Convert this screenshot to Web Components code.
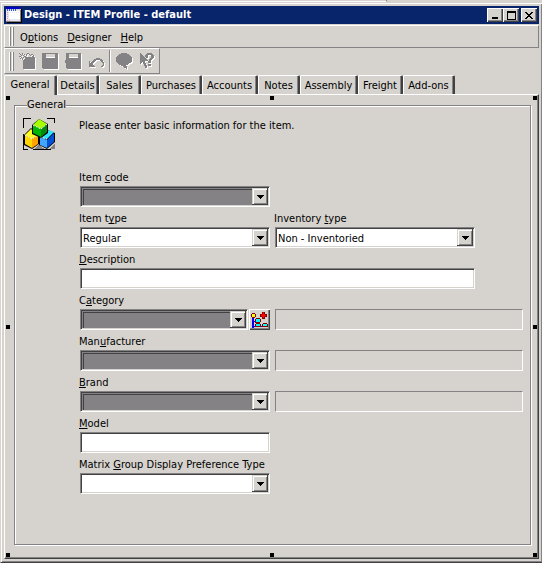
<!DOCTYPE html>
<html lang="en">
<head>
<meta charset="utf-8">
<title>Design - ITEM Profile - default</title>
<style>
:root{--face:#d6d3ce;--light:#fff;--shade:#848284;--dark:#424142;--navy:#08246b}
html,body{margin:0;height:100%}
body{display:flex;flex-direction:column;background:var(--face);color:#000;font:11px/14px "DejaVu Sans Condensed","DejaVu Sans",sans-serif}
</style>
</head>
<body>
<back-window></back-window>
<app-window>
  <title-bar>Design - ITEM Profile - default</title-bar>
  <menu-bar></menu-bar>
  <tool-bar></tool-bar>
  <tab-strip></tab-strip>
  <design-surface><item-form></item-form></design-surface>
</app-window>
<script>
const define = (name, html, init) => {
  const t = document.createElement('template');
  t.innerHTML = html;
  customElements.define(name, class extends HTMLElement {
    constructor() { super(); this.attachShadow({mode:'open'}); }
    connectedCallback() {
      if (this.shadowRoot.firstChild) return;
      this.shadowRoot.append(t.content.cloneNode(true));
      if (init) init.call(this, this.shadowRoot);
    }
  });
};
const reset = '*{box-sizing:border-box}button,input,select{font:inherit;color:inherit;margin:0;border:0;border-radius:0;padding:0;outline:0}u{text-underline-offset:1px;text-decoration-thickness:1px;text-decoration-skip-ink:none}svg{display:block;shape-rendering:crispEdges}';
// "&x" marks the access key of a caption
const caption = s => s.replace(/&(.)/, '<u>$1</u>');

define('back-window', `<style>:host{display:block;height:3px;flex:none}
div{width:71.4%;height:2px;box-sizing:border-box;border-bottom:1px solid #fff;border-right:1px solid var(--shade)}</style><div></div>`);

define('app-window', `<style>
:host{flex:1;display:flex;flex-direction:column;padding:3px;border-left:1px solid var(--face);border-bottom:1px solid var(--dark);box-shadow:inset 1px 1px var(--light),inset -1px -1px var(--shade)}
::slotted(*){flex:none}::slotted(design-surface){flex:1}
</style><slot></slot>`);

// Icons drawn from rows of characters, one character for a pixel
define('pixel-icon', `<style>${reset}:host{display:block}:host([etched]) svg{filter:drop-shadow(1px 1px 0 #fff)}</style>`, function(root){
  const rows = glyphs[this.getAttribute('name')];
  const w = Math.max(...rows.map(r => r.length));
  const colors = {'#':this.hasAttribute('etched') ? '#848284' : '#000', 'w':'#fff', 'f':'#d6d3ce', 'g':'#848284', 'n':'#0800c6', 'l':'#e7e7ef', 'r':'#e79cad', 'b':'#3165ce'};
  let s = '';
  rows.forEach((r, y) => { for (const m of r.matchAll(/([^.])\1*/g)) s += `<rect x="${m.index}" y="${y}" width="${m[0].length}" height="1" fill="${colors[m[1]]}"/>`; });
  root.innerHTML += `<svg width="${w}" height="${rows.length}" viewBox="0 0 ${w} ${rows.length}" aria-hidden="true">${s}</svg>`;
});
const glyphs = {
  app:['nnnnnnnnnnnnnn..','nnnnnnnnnnnnnn..','fbfbfbfbfbfffff#','lblblblblbllllg#','lllwwwwwwwwwwwg#','lrlwlwlwlwlwlwg#','lllwwwwwwwwwwwg#','lrlwwwwwwwwwwwg#','lllwwwwwwwwwwwg#','lrlwwwwwwwwwwwg#','lllwwwwwwwwwwwg#','lrlwwwwwwwwwwwg#','llllllllllllllg#','lrlrllllllllllg#','ggggggggggggggg#','.###############'],
  min:['........','........','........','........','........','........','.######.','.######.'],
  max:['#########','#########','#.......#','#.......#','#.......#','#.......#','#.......#','#.......#','#########'],
  close:['##....##','.##..##.','..####..','...##...','..####..','.##..##.','##....##'],
  arrow:['#######','.#####.','..###..','...#...'],
  add:['#..#....##......','.#.#.#.#..#.##..','..#.#..#...#..#.','##...##......##.','..#.#.##########','.#.#..##########','...#.###########','....############','....############','....############','....############','....############','....############','....############','....############','....############'],
  save:['################','####fffffffff###','####fffffffff###','####fffffffff###','####wwwwwwwww###','################','################','################','################','################','################','################','################','################','################','.###############'],
  saveas:['.###############','.###fffffffff###','.###fffffffff###','.###fffffffff###','.###wwwwwwwww###','.###############','.###############','################','################','################','.###############','.###############','.###############','.###############','.###############','..##############'],
  undo:['................','................','................','........####....','......########..','.....###....###.','.#..###......##.','.#.###........##','.####..........#','.####..........#','.#####........##','.######......##.','................'],
  balloon:['.....######.....','...##########...','..############..','.##############.','################','################','################','################','################','.##############.','..###########...','...#########....','.....#####......','.......####.....','........###.....','..........#.....'],
  whats:['.#......#####...','.##....#######..','.###..###...###.','.####.###...###.','.#####.##...###.','.######....###..','.#######..###...','.########.##....','.#####...###....','.##.##...###....','.#..###.........','.....##..###....','.....###.###....','......##........','......##........','................']
};

define('title-bar', `<style>${reset}
:host{display:flex;align-items:center;gap:2px;height:18px;padding:0 2px;background:var(--navy);color:#fff;font-weight:bold}
span{flex:1;white-space:nowrap;overflow:hidden}
div{display:flex;gap:2px}
.pair{gap:0}
button{width:16px;height:14px;display:grid;place-items:center;background:var(--face);box-shadow:inset 1px 1px #fff,inset -1px -1px var(--dark),inset -2px -2px var(--shade)}
</style><pixel-icon name="app"></pixel-icon><span><slot></slot></span>
<div><div class="pair"><button aria-label="Minimize"><pixel-icon name="min"></pixel-icon></button><button aria-label="Maximize"><pixel-icon name="max"></pixel-icon></button></div>
<button aria-label="Close"><pixel-icon name="close"></pixel-icon></button></div>`);

define('bar-grip', `<style>:host{display:block;width:6px;height:19px;margin-left:4px;box-sizing:border-box;
background:linear-gradient(90deg,#fff 0 1px,#d6d3ce 1px 1px,#848284 1px 2px,#d6d3ce 2px 3px,#fff 3px 4px,#848284 4px 5px,transparent 5px)}</style>`);

define('menu-bar', `<style>${reset}
:host{display:block;margin-top:1px}
nav{display:flex;align-items:center;gap:9px;height:23px;border:1px solid;border-color:#fff var(--shade) var(--shade) #fff}
bar-grip{margin-right:-4px}
button{background:none;padding-top:2px}
</style><nav><bar-grip></bar-grip></nav>`, function(root){
  const nav = root.querySelector('nav');
  for (const m of ['O&ptions','&Designer','&Help']) nav.insertAdjacentHTML('beforeend', `<button>${caption(m)}</button>`);
});

define('tool-bar', `<style>${reset}
:host{display:flex;height:26px}
div{display:flex;align-items:center;gap:7px;padding-right:4px;border:1px solid;border-color:#fff var(--shade) var(--shade) #fff}
bar-grip{margin-right:-3px}
button{background:none;width:16px;height:16px}
hr{width:2px;height:22px;margin:0 -2px;border:0;border-left:1px solid var(--shade);border-right:1px solid #fff}
</style><div role="toolbar" aria-label="Standard"><bar-grip></bar-grip>
<button aria-label="New"><pixel-icon etched name="add"></pixel-icon></button>
<button aria-label="Save"><pixel-icon etched name="save"></pixel-icon></button>
<button aria-label="Save as"><pixel-icon etched name="saveas"></pixel-icon></button>
<button aria-label="Undo"><pixel-icon etched name="undo"></pixel-icon></button><hr>
<button aria-label="Comment"><pixel-icon etched name="balloon"></pixel-icon></button>
<button aria-label="Context help"><pixel-icon etched name="whats"></pixel-icon></button></div>`);

define('tab-strip', `<style>${reset}
:host{display:block;position:relative;z-index:1;margin-top:1px;margin-bottom:-1px}
div{display:grid;grid-template-columns:53px 42px 42px 61px 56px 42px 58px 45px 52px;align-items:end}
button{height:19px;background:var(--face);white-space:nowrap;border:solid;border-width:1px 2px 0 1px;border-color:#fff var(--dark) #fff #fff;border-radius:2px 2px 0 0;box-shadow:inset -1px 0 var(--shade);margin-bottom:1px;padding-top:2px}
button[aria-selected=true]{height:20px;margin-bottom:0;padding:0 0 1px}
</style><div role="tablist"></div>`, function(root){
  const list = root.querySelector('div');
  ['General','Details','Sales','Purchases','Accounts','Notes','Assembly','Freight','Add-ons'].forEach((t, i) =>
    list.insertAdjacentHTML('beforeend', `<button role="tab" aria-selected="${i === 0}">${t}</button>`));
});

define('design-surface', `<style>
:host{position:relative;display:flex;border:1px solid;border-color:#fff var(--dark) var(--dark) #fff;box-shadow:inset -1px -1px var(--shade);padding:0 1px 1px 0}
::slotted(*){flex:1}
i{position:absolute;width:4px;height:4px;background:#000}
.l{left:1px}.c{left:calc(50% - 2px)}.r{right:1px}.t{top:1px}.m{top:calc(50% - 2px)}.b{bottom:1px}
</style><slot></slot><i class="l t"></i><i class="c t"></i><i class="r t"></i><i class="l m"></i><i class="r m"></i><i class="l b"></i><i class="c b"></i><i class="r b"></i>`);

const fieldStyle = `${reset}
:host{display:flex;flex-direction:column;gap:1px;min-width:0}
label{white-space:nowrap;margin-left:-1px}
.box{display:grid;height:21px;background:#fff;border:1px solid;border-color:var(--shade) #fff #fff var(--shade);box-shadow:inset 1px 1px var(--dark),inset -1px -1px var(--face)}
.box>*{grid-area:1/1;min-width:0}
input,select{appearance:none;width:100%;height:100%;background:none}
input{padding:0 2px}
select{padding:2px 18px 0 2px}
`;

define('text-field', `<style>${fieldStyle}
:host([readonly]) .box{background:var(--face);box-shadow:none}
</style><label for="f"></label><div class="box"><input id="f" type="text"></div>`, function(root){
  const label = root.querySelector('label'), text = this.getAttribute('label');
  if (this.hasAttribute('readonly')) { label.remove(); const f = root.querySelector('input'); f.readOnly = true; f.setAttribute('aria-label', text); }
  else label.innerHTML = caption(text);
});

define('combo-field', `<style>${fieldStyle}
:host([shaded]) .box{background:var(--shade);box-shadow:inset 1px 1px var(--dark),inset -1px -1px var(--face),inset 2px 2px var(--shade),inset 3px 3px var(--dark)}
.drop{justify-self:end;align-self:center;width:16px;height:17px;margin-right:1px;display:grid;place-items:center;background:var(--face);pointer-events:none;box-shadow:inset -1px -1px var(--dark),inset 1px 1px var(--face),inset 2px 2px #fff,inset -2px -2px var(--shade)}
.row{display:flex;gap:1px}.row .box{flex:1}
</style><label for="f"></label><div class="row"><div class="box"><select id="f"><option></option></select><span class="drop"><pixel-icon name="arrow"></pixel-icon></span></div><slot></slot></div>`, function(root){
  root.querySelector('label').innerHTML = caption(this.getAttribute('label'));
  root.querySelector('option').textContent = this.getAttribute('value') || '';
});

define('tree-button', `<style>${reset}:host{display:block;flex:none}
button{display:grid;place-items:center;width:21px;height:21px;background:var(--face);box-shadow:inset 1px 1px #fff,inset -1px -1px var(--dark),inset -2px -2px var(--shade)}
</style><button aria-label="Browse categories"><svg width="17" height="17" viewBox="0 0 17 17">
<path d="M1 7h2v10H1zM3 10h2v1H3zM3 15h10v1H3z" fill="#00f"/>
<path d="M1 2h3v1h1v3H4v1H1V6H0V3h1zM5 7h4v1h1v3H9v1H4V8h1zM5 12h4v1h1v3H4v-3h1zM12 12h4v1h1v3h-6v-3h1z" fill="#840000"/>
<path d="M1 3h3v3H1z" fill="#ff0"/><path d="M5 8h4v3H5zM5 13h4v2H5zM12 13h4v2h-4z" fill="#0ff"/>
<path d="M11 1h3v2h2v3h-2v2h-3V6H9V3h2z" fill="#840000"/><path d="M12 1h1v6h-1zM10 4h5v1h-5zM11 3h3v3h-3z" fill="#f00"/>
</svg></button>`);

define('cubes-icon', `<style>${reset}:host{display:block}</style><svg width="33" height="33" viewBox="0 0 33 33" aria-hidden="true">
<path d="M0 0h8v1H1v9H0zM24 0h8v5h-1V1h-7zM0 16h1v15h4v1H0zM26 31h2v1h-2z"/>
<path d="M11 31l5-4 7 5zM26 31l6-5v5z" fill="#848284"/>
<path d="M10 31h18v1H10z"/>
<g shape-rendering="auto">
<path d="M1 17L8 10l8 7v9l-7 5-8-4z" fill="#000"/><path d="M2 17l6-6 7 6-6 4z" fill="#ffff21"/><path d="M2 17l7 4v9l-7-4z" fill="#ffd600"/><path d="M9 21l6-4v9l-6 4z" fill="#ffa500"/><path d="M2 17l7 4 6-4" fill="none" stroke="#fff" stroke-dasharray="2 1"/>
<path d="M16 19l9-7 7 3v9l-8 7-8-4z" fill="#000"/><path d="M17 19l9-7 5 2-7 7z" fill="#31e3ff"/><path d="M17 19l7 3v8l-7-3z" fill="#42a6ff"/><path d="M24 22l7-7v9l-7 6z" fill="#0051d6"/><path d="M17 19l7 2" stroke="#fff" stroke-dasharray="2 1"/>
<path d="M9 7l7-6 9 5v9l-7 5-9-4z" fill="#000"/><path d="M10 7l6-6 8 5-6 5z" fill="#a5ff00"/><path d="M10 7l8 4v8l-8-4z" fill="#00b600"/><path d="M18 11l6-5v8l-6 5z" fill="#008a10"/><path d="M10 7l8 4 6-5" fill="none" stroke="#fff" stroke-dasharray="2 1"/>
</g></svg>`);

define('item-form', `<style>${reset}
:host{display:flex}
fieldset{flex:1;min-width:0;margin:3px 6px 12px 9px;padding:6px 7px 8px 8px;border:1px solid var(--shade);box-shadow:1px 1px #fff,inset 1px 1px #fff}
legend{margin-left:4px;padding:0;background:var(--face)}
.body{display:grid;grid-template-columns:33px 1fr;column-gap:24px}
p{margin:0 0 0 -1px;height:53px;line-height:16px}
.fields{display:grid;grid-template-columns:190fr 200fr 43fr;gap:5px;align-items:end}
.start{grid-column:1}.wide{grid-column:span 2}.start.wide{grid-column:1/3}
</style>
<fieldset><legend>General</legend><div class="body"><cubes-icon></cubes-icon>
<div><p>Please enter basic information for the item.</p>
<div class="fields">
<combo-field class="start" shaded label="Item &amp;code"></combo-field>
<combo-field class="start" label="Item t&amp;ype" value="Regular"></combo-field>
<combo-field label="Inventory &amp;type" value="Non - Inventoried"></combo-field>
<text-field class="start wide" label="&amp;Description"></text-field>
<combo-field class="start" shaded label="C&amp;ategory"><tree-button></tree-button></combo-field>
<text-field class="wide" readonly label="Category name"></text-field>
<combo-field class="start" shaded label="Man&amp;ufacturer"></combo-field>
<text-field class="wide" readonly label="Manufacturer name"></text-field>
<combo-field class="start" shaded label="&amp;Brand"></combo-field>
<text-field class="wide" readonly label="Brand name"></text-field>
<text-field class="start" label="&amp;Model"></text-field>
<combo-field class="start" label="Matrix &amp;Group Display Preference Type"></combo-field>
</div></div></div></fieldset>`);
</script>
</body>
</html>
